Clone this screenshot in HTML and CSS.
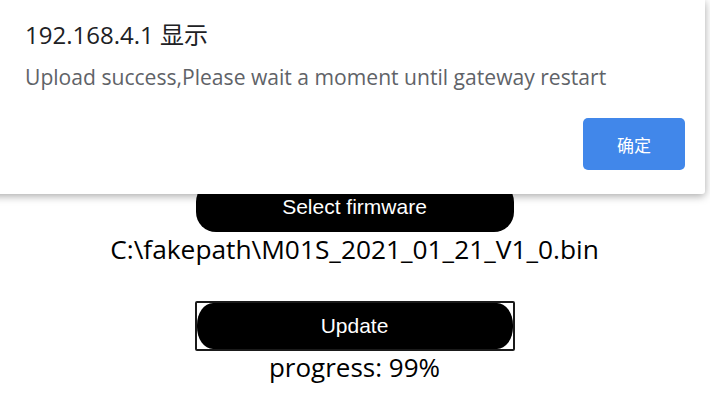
FILE: index.html
```html
<!DOCTYPE html>
<html>
<head>
<meta charset="utf-8">
<link rel="stylesheet" href="styles.css">
</head>
<body>
<main class="page">
  <button class="btn select">Select firmware</button>
  <div class="path">C:\fakepath\M01S_2021_01_21_V1_0.bin</div>
  <div class="focus-ring"><button class="btn update">Update</button></div>
  <div class="progress">progress: 99%</div>
</main>
<div class="dialog">
  <div class="title">192.168.4.1 显示</div>
  <div class="message">Upload success,Please wait a moment until gateway restart</div>
  <div class="actions"><button class="ok">确定</button></div>
</div>
</body>
</html>
```
FILE: styles.css
```css
html, body { margin: 0; padding: 0; background: #fff; }
body { width: 710px; height: 402px; overflow: hidden; position: relative; }
.page {
  display: flex; flex-direction: column; align-items: center;
  padding-top: 182px; padding-right: 1px;
  font-family: "Open Sans", "Noto Sans CJK SC", sans-serif; color: #000;
}
.btn {
  width: 318px; height: 50px; border: none; border-radius: 20px;
  background: #000; color: #fff;
  font-family: "Liberation Sans", Arial, sans-serif; font-size: 21px;
  padding: 0; margin: 0;
}
.path { font-size: 26.3px; line-height: 36px; margin-top: -1px; }
.focus-ring {
  margin-top: 34px; border: 2px solid #1a1a1a; border-radius: 2px;
  width: 316px; height: 46px; display: flex;
}
.update { width: 316px; height: 46px; border-radius: 16px / 22px; }
.progress { font-size: 26px; line-height: 34px; margin-top: -1px; }

.dialog {
  position: absolute; left: -20px; top: 0; width: 725px; height: 194px;
  background: #fff; box-shadow: 0 2px 8px rgba(0,0,0,0.35);
  border-radius: 0 0 3px 0;
  font-family: "Open Sans", "Noto Sans CJK SC", sans-serif;
  box-sizing: border-box; padding: 20px 0 0 45px;
}
.title { font-size: 24px; color: #202124; line-height: 30px; }
.message { font-size: 21.1px; color: #5f6368; line-height: 30px; margin-top: 12px; }
.actions { display: flex; justify-content: flex-end; padding-right: 20px; margin-top: 26px; }
.ok {
  width: 102px; height: 52px; border: none; border-radius: 5px;
  background: #4187ea; color: #fff; font-size: 17px;
  font-family: "Noto Sans CJK SC", sans-serif;
}
```
